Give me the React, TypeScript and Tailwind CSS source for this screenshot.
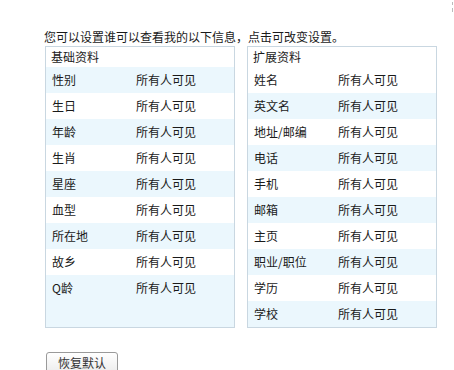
const basic = ['性别', '生日', '年龄', '生肖', '星座', '血型', '所在地', '故乡', 'Q龄'];
const extra = ['姓名', '英文名', '地址/邮编', '电话', '手机', '邮箱', '主页', '职业/职位', '学历', '学校'];

function Panel({ title, items, blueFirst }: { title: string; items: string[]; blueFirst: boolean }) {
    return (
        <div className="w-[190px] border border-[#c9d7e1] bg-white">
            <div className="h-[20px] pl-[5px] leading-[20px]">{title}</div>
            <ul className="h-[260px] bg-[#ebf7fd]">
                {items.map((label, i) => {
                    const blue = blueFirst ? i % 2 === 0 : i % 2 === 1;
                    return (
                        <li
                            key={label}
                            className={
                                'flex h-[26px] items-center pl-[6px] ' + (blue ? 'bg-[#ebf7fd]' : 'bg-white')
                            }
                        >
                            <span className="w-[84px]">{label}</span>
                            <span className="cursor-pointer">所有人可见</span>
                        </li>
                    );
                })}
            </ul>
        </div>
    );
}

export default function App() {
    return (
        <div
            className="relative h-[370px] w-[454px] overflow-hidden bg-white text-[12px] text-[#1a1a1a]"
            style={{ fontFamily: '"Noto Sans CJK SC", "Noto Sans", sans-serif' }}
        >
            <span className="absolute right-[1px] top-[2px] h-[3px] w-[1px] bg-[#bbb]" />
            <span className="absolute right-[1px] top-[8px] h-[4px] w-[1px] bg-[#bbb]" />

            <div className="pl-[44px] pt-[29px]">
                <p className="h-[17px] leading-[16px]">您可以设置谁可以查看我的以下信息，点击可改变设置。</p>
                <div className="flex gap-[12px] pl-[1px]">
                    <Panel title="基础资料" items={basic} blueFirst />
                    <Panel title="扩展资料" items={extra} blueFirst={false} />
                </div>
                <button
                    type="button"
                    className="ml-[2px] mt-[24px] h-[22px] w-[72px] rounded-[3px] border border-[#9a9a9a] bg-gradient-to-b from-white to-[#ececec] text-[12px] leading-[18px] text-[#333]"
                >
                    恢复默认
                </button>
            </div>
        </div>
    );
}
